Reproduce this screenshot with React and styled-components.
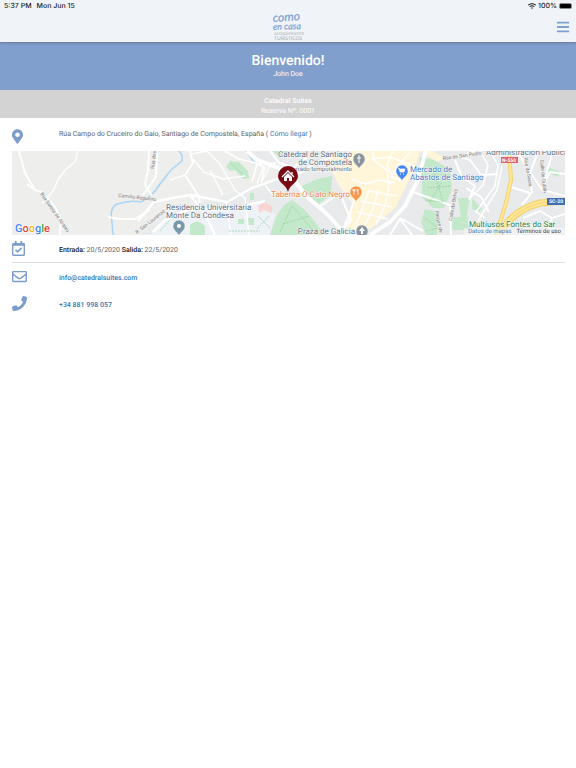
import styled, { createGlobalStyle } from "styled-components";
import {
  FaWifi,
  FaBars,
  FaMapMarkerAlt,
  FaRegCalendarCheck,
  FaRegEnvelope,
  FaPhone,
} from "react-icons/fa";

const GlobalStyle = createGlobalStyle`
  body {
    margin: 0;
    background: #fff;
    color: #616161;
    font-family: Roboto, "Liberation Sans", sans-serif;
    font-size: 7px;
    line-height: 12px;
    text-rendering: geometricPrecision;
  }
  * {
    box-sizing: border-box;
  }
`;

const areas = [
  { fill: "#e9eaec", d: "M248 151H565V235H140L160 218L200 203L250 188L284 176Z" },
  { fill: "#eef1f5", d: "M150 235L165 220L210 210L265 203L275 215L270 235Z" },
  { fill: "#fff5d9", d: "M329 157L352 151H420L416 166L404 190L396 207L372 228L345 235L352 203L340 187L333 174Z" },
  { fill: "#fff5d9", d: "M420 151H433L445 158L437 162Z" },
];

const parks = [
  "M292 200L305 210L315 222L324 235H270L276 217L284 205Z",
  "M300 187L317 179L332 176L331 194L319 204L312 200Z",
  "M226 167L230 161L239 162L248 171L249 178L243 179L235 170L230 171Z",
  "M190 235V225Q197 218 205 226V235Z",
  "M250 193H254V200H250Z",
  "M238 219H244V224H238ZM247 218H254V225H247Z",
  "M273 151H290L280 158Z",
  "M420 157L434 160L450 169L452 190L444 208L433 208L422 197L422 181Z",
  "M425 209L438 212L437 235H426L421 222Z",
  "M458 198H470L467 213L469 230H451L453 217H461Z",
  "M472 198L482 209L479 212L472 209Z",
  "M548 167L560 172L558 177L546 172Z",
];

const paths = "M280 232L292 206L314 231M283 224L309 216M433 168L443 202L425 200M427 188L451 186M430 202L441 183M425 218L438 228L426 231M258 216L270 228M269 216L257 229M160 231L170 220M231 163L243 175M229 231H260";

const streets = [
  { w: 2, d: "M19 151L25 173L35 190L42 192L55 207L61 220L60 235M27 184L35 190" },
  { w: 1.5, d: "M78 151L75 162L65 170L58 180L53 191L47 198L42 203" },
  { w: 2, d: "M108 217L120 219L135 219L150 210M149 151L148 170L145 185L152 196" },
  { w: 2, d: "M157 151L156 177L143 195M190 151L193 163L185 175L198 195L200 203" },
  { w: 1.5, d: "M170 180L185 175M192 154L207 151L220 164L235 190L246 199M193 159L204 172L223 179L245 176" },
  { w: 2.5, d: "M138 221L154 202L172 198L191 195L227 202L252 188L283 177" },
  { w: 2.5, d: "M153 232L165 220L190 209L230 209L265 201M190 195L205 214L215 235" },
  { w: 1.5, d: "M225 151L239 159L260 164L276 163M252 182L257 164L265 168L261 182M257 183L264 166M262 181L270 166" },
  { w: 1.5, d: "M210 170L223 195M226 202L231 235M245 198L249 235M265 185L274 196" },
  { w: 4, d: "M247 151L257 160L279 168L293 178L306 196L326 213L340 228L344 235" },
  { w: 2.5, d: "M284 173L300 173L315 163L332 157M270 151L279 163L293 168L307 157" },
  { w: 4, d: "M426 151L417 182L405 206L390 222L370 235" },
  { w: 2, d: "M320 206L339 194L350 194M341 196L351 220L342 231M358 188L350 213L343 229" },
  { w: 1.5, d: "M351 179L365 184L379 180L395 183M369 190L362 210L354 229M378 190L373 209L365 225M389 186L385 205L376 225M357 212L388 219M361 201L392 207M369 191L397 196" },
  { w: 1.5, d: "M372 151L375 161L387 170L389 185M393 151L387 165L394 179M412 151L400 163L391 177L403 181M371 159L390 157L414 166" },
  { w: 2, d: "M390 235L400 219L412 235M410 191L430 198L450 205L451 235M400 218L423 231" },
  { w: 2, d: "M455 160L462 177L475 186L469 200M454 155L470 160L481 175L498 174M464 155L475 151M466 188L481 197L489 212" },
  { w: 1.5, d: "M480 151L488 165L483 185L470 198M490 151L498 165L495 186L476 212M502 166L497 190L478 221M485 218L475 211" },
  { w: 2, d: "M517 151L528 169L542 190L565 196M538 151L530 174L532 192L522 205M541 190L550 172L565 174M544 181L553 151" },
  { w: 2, d: "M511 187L530 193M523 218L540 211L552 218L565 214M517 225L535 226L543 235M552 218L547 231" },
];

const Page = styled.div`
  min-height: 100vh;
  background: #fff;
`;

const Header = styled.header`
  position: relative;
  background: #f0f4f9;
  box-shadow: 0 1px 2px rgba(60, 80, 110, 0.5);
`;

const StatusBar = styled.div`
  display: flex;
  justify-content: space-between;
  height: 12px;
  padding: 0 4px;
  color: #222;
  font-family: Inter, sans-serif;
  font-weight: 500;
`;

const StatusGroup = styled.div`
  display: flex;
  align-items: center;
  gap: ${(props) => props.$gap}px;
`;

const Battery = styled.span`
  display: block;
  width: 13px;
  height: 6px;
  border: 1px solid #888;
  border-radius: 2px;
  background: #000;
`;

const TopBar = styled.div`
  display: grid;
  grid-template-columns: 1fr auto 1fr;
  align-items: center;
  height: 30px;
  padding: 0 6px;
`;

const MenuButton = styled.button`
  grid-column: 3;
  justify-self: end;
  display: flex;
  padding: 0;
  border: 0;
  background: none;
  color: #7fa0d0;
  font-size: 14px;
`;

const Logo = styled.svg`
  grid-column: 2;
  display: block;
  width: 32px;
  height: 30px;
  overflow: visible;
`;

const Welcome = styled.section`
  height: 48px;
  padding-top: 10px;
  background: #819fcc;
  color: #fff;
  text-align: center;
`;

const Title = styled.h1`
  margin: 0;
  font-size: 14px;
  font-weight: 500;
  line-height: 18px;
`;

const Guest = styled.p`
  margin: 0;
  line-height: 8px;
`;

const Booking = styled.section`
  padding: 6px 0 2px;
  background: #d3d3d3;
  color: #fff;
  text-align: center;
  line-height: 10px;
`;

const BookingLine = styled.div`
  font-weight: ${(props) => (props.$strong ? 500 : 400)};
`;

const Content = styled.main`
  padding: 0 11px 0 12px;
`;

const Row = styled.div`
  display: grid;
  grid-template-columns: 47px 1fr;
  align-items: start;
  padding: 6px 0 3px;
  line-height: 18px;
  border-bottom: ${(props) => (props.$line ? "1px solid #dedede" : "0")};
`;

const AddressRow = styled(Row)`
  padding: 11px 0 7px;
  line-height: 10px;
`;

const RowIcon = styled.span`
  display: flex;
  color: #7c9cca;

  svg {
    width: ${(props) => props.$width || 15}px;
    height: 15px;
  }
`;

const Link = styled.a`
  color: #337ab7;
  font-weight: ${(props) => (props.$bold ? 500 : 400)};
  text-decoration: none;
`;

const Strong = styled.strong`
  color: #222;
  font-weight: 500;
`;

const MapBox = styled.div`
  position: relative;
  height: 84px;
  overflow: hidden;
  background: #eeeeed;
`;

const MapDrawing = styled.svg`
  display: block;
  width: 100%;
  height: 100%;
  font-family: Roboto, sans-serif;
`;

const Credits = styled.div`
  position: absolute;
  right: 0;
  bottom: 0;
  display: flex;
  gap: 5px;
  padding: 0 4px;
  background: rgba(245, 245, 245, 0.6);
  font-size: 6px;
  line-height: 7px;
`;

const CreditLink = styled.a`
  color: ${(props) => props.$color};
  text-decoration: none;
`;

const PlaceLabel = styled.text`
  fill: ${(props) => props.$color || "#607080"};
  font-size: ${(props) => props.$size || 8}px;
  text-anchor: ${(props) => props.$anchor || "start"};
  stroke: #fff;
  stroke-width: 1px;
  paint-order: stroke;
`;

const StreetLabel = styled.text`
  fill: #777;
  font-size: 5px;
  stroke: #f3f3f3;
  stroke-width: 1px;
  paint-order: stroke;
`;

const Pin = ({ x, y, color, children }) => (
  <g transform={`translate(${x} ${y})`}>
    <path d="M0 9C-1 5-6 4-6-1A6 6 0 0 1 6-1C6 4 1 5 0 9Z" fill={color} stroke="#fff" strokeWidth="0.5" />
    {children}
  </g>
);

const BrandLogo = () => (
  <Logo viewBox="0 0 32 30" role="img" aria-label="Como en casa, alojamientos turísticos">
    <g fill="#7ca0d3" stroke="#7ca0d3" strokeWidth="0.2" fontFamily="Lato, sans-serif" fontStyle="italic">
      <text x="1" y="10" fontSize="12" transform="rotate(-4 1 10)">como</text>
      <text x="1" y="18" fontSize="9" transform="rotate(-2 1 18)">en casa</text>
    </g>
    <g fill="#a3a8b0" fontFamily="Lato, sans-serif">
      <text x="2" y="23" fontSize="4">ALOJAMIENTOS</text>
      <text x="2" y="28" fontSize="5">TURÍSTICOS</text>
    </g>
  </Logo>
);

const LocationMap = () => (
  <MapBox>
    <MapDrawing viewBox="12 151 553 84" preserveAspectRatio="xMidYMid slice" role="img" aria-label="Mapa">
      {areas.map((area) => (
        <path key={area.d} d={area.d} fill={area.fill} />
      ))}
      <path d={parks.join("")} fill="#c3e8ca" />
      <path d="M258 206L265 202L272 207V213L264 210L259 213Z" fill="#f8d5d0" />
      <path
        d="M113 235L112 222Q109 208 117 204Q130 200 141 202Q153 196 160 184L171 170L182 161V155L179 151M246 151L254 162L263 163"
        fill="none"
        stroke="#a9d5f5"
        strokeWidth="1.5"
      />
      <g fill="none" stroke="#fff" strokeLinejoin="round">
        {streets.map((street) => (
          <path key={street.d} d={street.d} strokeWidth={street.w} />
        ))}
      </g>
      <path d={paths} fill="none" stroke="#8ecf9d" strokeWidth="0.7" strokeDasharray="2 1" />
      <g fill="none" strokeLinejoin="round">
        <path d="M509 151L511 180L506 203L496 235" stroke="#f2cf63" strokeWidth="4" />
        <path d="M498 236Q512 210 540 203L565 201" stroke="#f2cf63" strokeWidth="7" />
        <path d="M509 151L511 180L506 203L496 235" stroke="#ffe695" strokeWidth="2.5" />
        <path d="M498 236Q512 210 540 203L565 201" stroke="#ffe695" strokeWidth="5" />
        <path d="M498 236Q512 210 540 203L565 201" stroke="#f2cf63" strokeWidth="0.7" />
      </g>

      <StreetLabel transform="translate(40 194) rotate(55)">Rúa Sarela de Abaixo</StreetLabel>
      <StreetLabel transform="translate(118 197) rotate(6)">Camiño Regueiro</StreetLabel>
      <StreetLabel transform="translate(154 169) rotate(-83)">Rúa dos</StreetLabel>
      <StreetLabel transform="translate(137 234) rotate(-38)">R. San Lourenzo</StreetLabel>
      <StreetLabel transform="translate(443 160) rotate(-8)">Rúa de San Pedro</StreetLabel>
      <StreetLabel transform="translate(452 221) rotate(-80)">Calle de Belvís</StreetLabel>
      <StreetLabel transform="translate(435 211) rotate(78)">Parque de</StreetLabel>
      <StreetLabel transform="translate(524 158) rotate(80)">Rúa da Sacra</StreetLabel>
      <StreetLabel transform="translate(540 160) rotate(84)">Calle de Dublín</StreetLabel>

      <PlaceLabel x="166" y="210">Residencia Universitaria</PlaceLabel>
      <PlaceLabel x="166" y="218">Monte Da Condesa</PlaceLabel>
      <PlaceLabel x="352" y="157" $anchor="end">Catedral de Santiago</PlaceLabel>
      <PlaceLabel x="352" y="165" $anchor="end">de Compostela</PlaceLabel>
      <PlaceLabel x="352" y="171" $anchor="end" $size={6}>Cerrado temporalmente</PlaceLabel>
      <PlaceLabel x="350" y="197" $anchor="end" $color="#e8854f">Taberna O Gato Negro</PlaceLabel>
      <PlaceLabel x="355" y="234" $anchor="end">Praza de Galicia</PlaceLabel>
      <PlaceLabel x="410" y="172" $color="#4479c5">Mercado de</PlaceLabel>
      <PlaceLabel x="410" y="180" $color="#4479c5">Abastos de Santiago</PlaceLabel>
      <PlaceLabel x="486" y="155">Administración Pública</PlaceLabel>
      <PlaceLabel x="469" y="227" $color="#218049">Multiusos Fontes do Sar</PlaceLabel>

      <Pin x={179} y={227} color="#7898aa"><circle r="2" cy="-1" fill="#fff" /></Pin>
      <Pin x={359} y={160} color="#8a949e"><path d="M0-5V3M-2-2H2" stroke="#fff" /></Pin>
      <Pin x={356} y={193} color="#f5954e"><path d="M-2-4V2M-3-4V-2H-1V-4M2 2V-4C0-3 1-1 2-1" fill="none" stroke="#fff" strokeWidth="0.8" /></Pin>
      <Pin x={402} y={172} color="#4285f4"><path d="M-4-4H-3L-2 0H2L3-3H-3" fill="#fff" stroke="#fff" strokeWidth="0.7" /><path d="M-2 2H-1M1 2H2" stroke="#fff" /></Pin>
      <Pin x={362} y={232} color="#8a949e"><path d="M0-5L3-1H1V2H-1V-1H-3Z" fill="#fff" /></Pin>

      <rect x="501" y="157" width="17" height="6" fill="#e0626a" />
      <text x="509" y="162" fill="#fff" fontSize="5" fontWeight="700" textAnchor="middle">N-550</text>
      <rect x="547" y="198" width="18" height="7" fill="#3f6eb5" />
      <text x="556" y="203" fill="#fff" fontSize="5" fontWeight="700" textAnchor="middle">SC-20</text>

      <path d="M288 192C286 184 278 183 278 176A10 10 0 0 1 298 176C298 183 290 184 288 192Z" fill="#780b12" />
      <path d="M282 177L288 171L294 177M292 175V172" fill="none" stroke="#fff" strokeWidth="1.3" />
      <path d="M284 177L288 173L292 177V181H289V178H287V181H284Z" fill="#fff" />

      <text x="15" y="232" fontSize="11" fontWeight="500" fontFamily="Roboto, sans-serif" stroke="#fff" strokeWidth="1" paintOrder="stroke">
        <tspan fill="#4285f4">G</tspan>
        <tspan fill="#ea4335">o</tspan>
        <tspan fill="#fbbc05">o</tspan>
        <tspan fill="#4285f4">g</tspan>
        <tspan fill="#34a853">l</tspan>
        <tspan fill="#ea4335">e</tspan>
      </text>
    </MapDrawing>
    <Credits>
      <CreditLink href="#datos" $color="#4b83bd">Datos de mapas</CreditLink>
      <CreditLink href="#terminos" $color="#444">Términos de uso</CreditLink>
    </Credits>
  </MapBox>
);

const App = () => {
  return (
    <Page>
      <GlobalStyle />
      <Header>
        <StatusBar>
          <StatusGroup $gap={5}>
            <span>5:37 PM</span>
            <span>Mon Jun 15</span>
          </StatusGroup>
          <StatusGroup $gap={2}>
            <FaWifi size={8} />
            <span>100%</span>
            <Battery />
          </StatusGroup>
        </StatusBar>
        <TopBar>
          <BrandLogo />
          <MenuButton type="button" aria-label="Menú">
            <FaBars />
          </MenuButton>
        </TopBar>
      </Header>
      <Welcome>
        <Title>Bienvenido!</Title>
        <Guest>John Doe</Guest>
      </Welcome>
      <Booking>
        <BookingLine $strong>Catedral Suites</BookingLine>
        <BookingLine>Reserva Nº: 0001</BookingLine>
      </Booking>
      <Content>
        <AddressRow>
          <RowIcon $width={11}><FaMapMarkerAlt /></RowIcon>
          <span>
            Rúa Campo do Cruceiro do Gaio, Santiago de Compostela, España ({" "}
            <Link href="#llegar">Cómo llegar</Link> )
          </span>
        </AddressRow>
        <LocationMap />
        <Row $line>
          <RowIcon $width={13}><FaRegCalendarCheck /></RowIcon>
          <span>
            <Strong>Entrada:</Strong> 20/5/2020 <Strong>Salida:</Strong> 22/5/2020
          </span>
        </Row>
        <Row>
          <RowIcon><FaRegEnvelope /></RowIcon>
          <Link $bold href="mailto:info@catedralsuites.com">info@catedralsuites.com</Link>
        </Row>
        <Row>
          <RowIcon><FaPhone /></RowIcon>
          <Link $bold href="tel:+34881998057">+34 881 998 057</Link>
        </Row>
      </Content>
    </Page>
  );
};

export default App;
